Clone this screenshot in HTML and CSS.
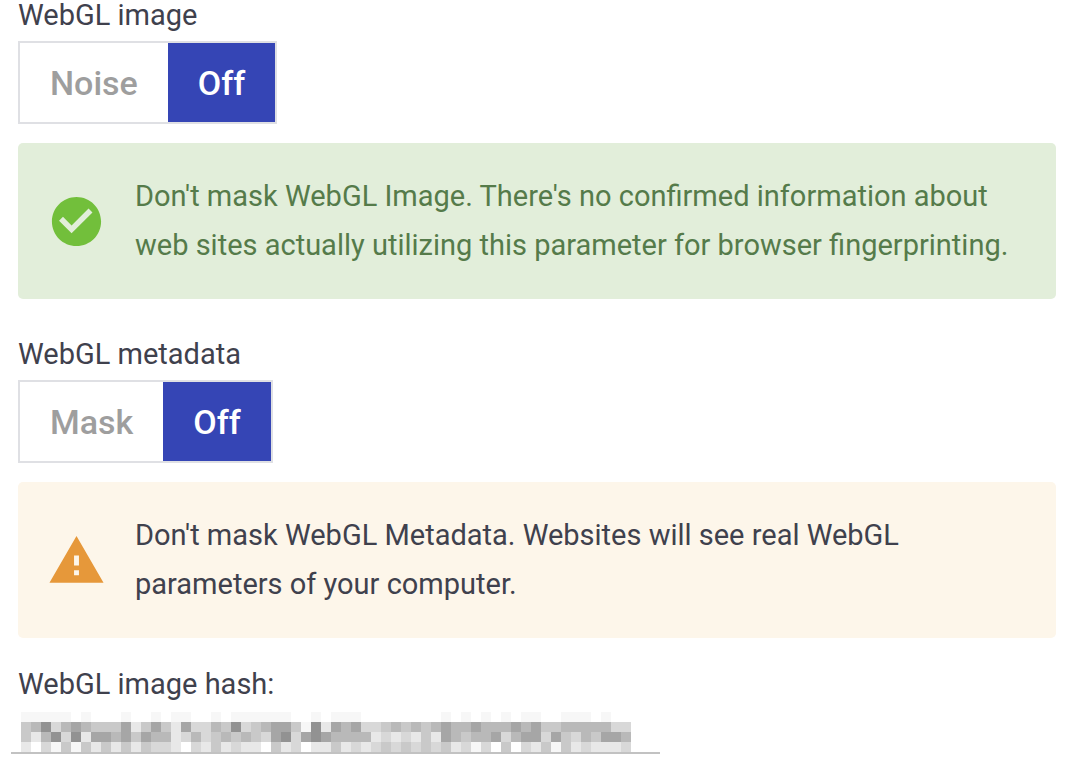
FILE: index.html
```html
<!DOCTYPE html>
<html lang="en">
  <head>
    <meta charset="UTF-8" />
    <meta name="viewport" content="width=device-width, initial-scale=1.0" />
    <title>WebGL settings</title>
    <link rel="stylesheet" href="styles.css">
  </head>
  <body>
    <div class="main">
      <!-- WebGL image -->
      <div class="setting">
        <div class="label" id="image-label">WebGL image</div>
        <div class="toggle" role="group" aria-labelledby="image-label">
          <button type="button" aria-pressed="false">Noise</button>
          <button type="button" class="active" aria-pressed="true">Off</button>
        </div>
        <div class="alert success">
          <svg class="icon" viewBox="0 0 24 24" aria-hidden="true">
            <path
              d="M12 2C6.48 2 2 6.48 2 12s4.48 10 10 10 10-4.48 10-10S17.52 2 12 2zm-2 14.8l-5.1-5.1 1.6-1.6L10 13.6l6.9-6.9 1.6 1.6-8.5 8.5z"
            />
          </svg>
          <p>
            Don't mask WebGL Image. There's no confirmed information about web
            sites actually utilizing this parameter for browser fingerprinting.
          </p>
        </div>
      </div>

      <!-- WebGL metadata -->
      <div class="setting">
        <div class="label" id="metadata-label">WebGL metadata</div>
        <div class="toggle" role="group" aria-labelledby="metadata-label">
          <button type="button" aria-pressed="false">Mask</button>
          <button type="button" class="active" aria-pressed="true">Off</button>
        </div>
        <div class="alert warning">
          <svg class="icon" viewBox="0 0 24 24" aria-hidden="true">
            <path d="M1 21h22L12 2 1 21zm12-3h-2v-2h2v2zm0-4h-2v-4h2v4z" />
          </svg>
          <p>
            Don't mask WebGL Metadata. Websites will see real WebGL parameters
            of your computer.
          </p>
        </div>
      </div>

      <!-- Image hash, value is hidden -->
      <div class="hash">
        <label class="label" for="hash">WebGL image hash:</label>
        <div class="field">
          <input type="text" id="hash" readonly />
          <svg class="mosaic" id="mosaic" viewBox="0 0 620 40" aria-hidden="true"></svg>
        </div>
      </div>
    </div>

    <script src="script.js"></script>
  </body>
</html>
```
FILE: styles.css
```css
* {
  box-sizing: border-box;
}

body {
  margin: 0;
  background-color: white;
  color: #3f414d;
  font-family: Roboto, Arial, sans-serif;
  font-size: 29px;
}

.main {
  padding: 0 17px 16px 18px;
}

.setting {
  margin-bottom: 40px;
}

.setting:nth-child(2) {
  margin-bottom: 31px;
}

.label {
  display: block;
  line-height: 30px;
}

.toggle {
  display: inline-flex;
  height: 83px;
  margin-top: 11px;
  border: 2px solid #dfe0e4;
  vertical-align: top;
}

.toggle button {
  padding: 0 30px;
  border: none;
  background-color: white;
  color: #9e9e9e;
  font-family: inherit;
  font-size: 34px;
  font-weight: 500;
  cursor: pointer;
}

.toggle .active {
  background-color: #3545b5;
  color: white;
}

.alert {
  display: flex;
  align-items: center;
  gap: 29px;
  margin-top: 19px;
  padding: 29px;
  border-radius: 5px;
}

.alert p {
  margin: 0;
  line-height: 49px;
}

.icon {
  flex: none;
  width: 59px;
  height: 59px;
}

.success {
  background-color: #e2eeda;
  color: #557b4a;
}

.success .icon {
  fill: #72bf3b;
}

.warning {
  background-color: #fdf6ea;
}

.warning .icon {
  fill: #e6983a;
}

.field {
  position: relative;
  max-width: 649px;
  margin-top: 13px;
  margin-left: -7px;
}

.field input {
  display: block;
  width: 100%;
  height: 42px;
  border: none;
  border-bottom: 2px solid #c2c2c2;
  outline: none;
  font: inherit;
}

.mosaic {
  position: absolute;
  top: 0;
  left: 0;
  width: 620px;
  height: 40px;
}
```
FILE: script.js
```js
// one letter per 10px block, g is white
const rows = [
  "gfffffgfgggfggfgffggfgffffffggfgfffggggggggfgfgfgfgffggfffgfgg",
  "gcb9dbabcccaecaceaddbc9dcbaacf9eabaddcbcbcbabbabbbabaccbbbbbdd",
  "gceb9d9eaabacabbedbdcbcbcda9da9abbbbededeceabcbbadbaadacdbcaab",
  "gegdfcfcecececddegdecedeegcedgeecededcdcdcdcedfdgcgdecfcedeeed",
];
const shades = {
  g: "#ffffff",
  f: "#f7f7f7",
  e: "#e8e8e8",
  d: "#d8d8d8",
  c: "#c9c9c9",
  b: "#b9b9b9",
  a: "#a6a6a6",
  9: "#929292",
};

const mosaic = document.getElementById("mosaic");

rows.forEach((row, y) => {
  [...row].forEach((shade, x) => {
    const rect = document.createElementNS("http://www.w3.org/2000/svg", "rect");
    rect.setAttribute("x", x * 10);
    rect.setAttribute("y", y * 10);
    rect.setAttribute("width", 10);
    rect.setAttribute("height", 10);
    rect.setAttribute("fill", shades[shade]);
    mosaic.appendChild(rect);
  });
});
```
